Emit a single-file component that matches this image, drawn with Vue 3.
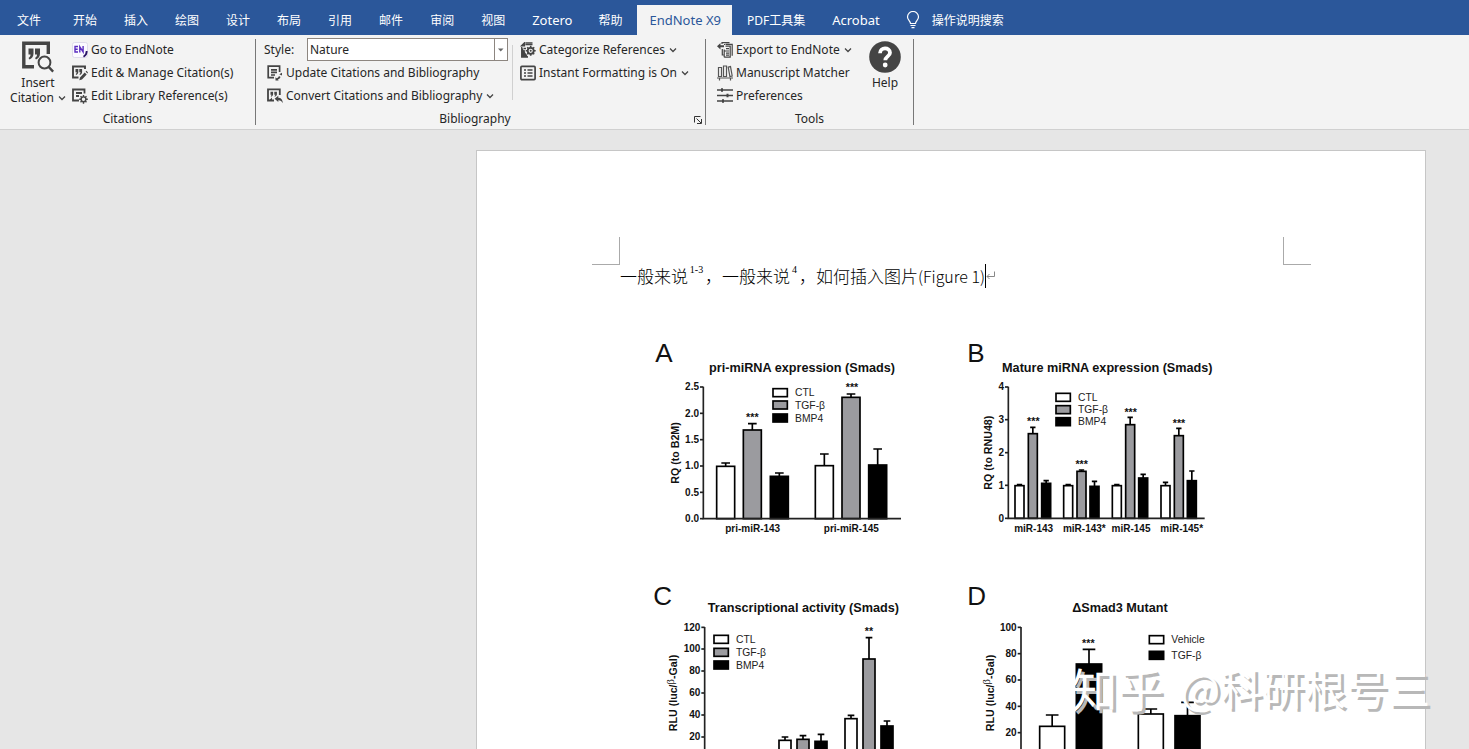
<script setup>
import { ref } from 'vue'

const tabs = ['文件', '开始', '插入', '绘图', '设计', '布局', '引用', '邮件', '审阅', '视图', 'Zotero', '帮助', 'EndNote X9', 'PDF工具集', 'Acrobat']
const isLatin = (t) => /^[\w ]+$/.test(t)
const active = ref('EndNote X9')
const style = ref('Nature')

const WHITE = '#fff'
const GREY = '#9b9b9f'
const BLACK = '#000'

// Chart geometry is in thirds of a pixel (viewBox is three times the drawn size).
const bar = (x, w, top, err, fill) => ({ x, w, top, err, fill })
const trio = (xs, w, tops, errs) => xs.map((x, i) => bar(x, w, tops[i], errs[i], [WHITE, GREY, BLACK][i]))
const threeKeys = (ys) => ['CTL', 'TGF-β', 'BMP4'].map((name, i) => ({ name, y: ys[i], fill: [WHITE, GREY, BLACK][i] }))

const charts = [
  {
    id: 'A', letterX: 46, letterY: 81, title: 'pri-miRNA expression (Smads)', titleX: 486, titleY: 110,
    axisX: 190, axisEnd: 783, top: 155, base: 551,
    ticks: [['2.5', 156], ['2.0', 235], ['1.5', 314], ['1.0', 393], ['0.5', 472], ['0.0', 551]],
    unit: 'RQ (to B2M)', unitX: 117, unitY: 354,
    bars: [
      ...trio([230, 310, 391], 54, [394, 285, 424], [384, 266, 414]),
      ...trio([526, 606, 686], 54, [392, 187, 390], [357, 177, 342]),
    ],
    cap: 13,
    stars: [['***', 337, 258], ['***', 636, 168]],
    labels: [['pri-miR-143', 338], ['pri-miR-145', 634]],
    keyX: 399, keys: threeKeys([161, 198, 237]),
  },
  {
    id: 'B', letterX: 52, letterY: 81, title: 'Mature miRNA expression (Smads)', titleX: 472, titleY: 110,
    axisX: 175, axisEnd: 764, top: 155, base: 550,
    ticks: [['4', 156], ['3', 254], ['2', 353], ['1', 451], ['0', 550]],
    unit: 'RQ (to RNU48)', unitX: 127, unitY: 353,
    bars: [
      ...trio([195, 235, 275], 27, [452, 296, 445], [449, 277, 437]),
      ...trio([341, 381, 420], 27, [452, 409, 454], [449, 405, 439]),
      ...trio([487, 527, 566], 27, [452, 269, 429], [449, 247, 418]),
      ...trio([633, 673, 712], 27, [452, 302, 437], [442, 280, 408]),
    ],
    cap: 8,
    stars: [['***', 250, 270], ['***', 395, 400], ['***', 542, 242], ['***', 687, 276]],
    labels: [['miR-143', 251], ['miR-143*', 403], ['miR-145', 543], ['miR-145*', 695]],
    keyX: 318, keys: threeKeys([175, 212, 248]),
  },
  {
    id: 'C', letterX: 40, letterY: 75, title: 'Transcriptional activity (Smads)', titleX: 490, titleY: 95,
    axisX: 194, axisEnd: 790, top: 141, base: 537,
    ticks: [['120', 142], ['100', 207], ['80', 273], ['60', 339], ['40', 405], ['20', 471]],
    unit: 'beta', unitX: 111, unitY: 339,
    bars: [
      ...trio([417, 471, 525], 36, [481, 478, 484], [471, 467, 463]),
      ...trio([615, 669, 723], 36, [416, 237, 438], [406, 173, 423]),
    ],
    cap: 10,
    stars: [['**', 687, 166]],
    labels: [],
    keyX: 222, keys: threeKeys([166, 205, 243]),
  },
  {
    id: 'D', letterX: 52, letterY: 75, title: 'ΔSmad3 Mutant', titleX: 510, titleY: 95,
    axisX: 213, axisEnd: 800, top: 141, base: 537,
    ticks: [['100', 142], ['80', 221], ['60', 300], ['40', 379], ['20', 458]],
    unit: 'beta', unitX: 131, unitY: 339,
    bars: [
      bar(269, 75, 439, 405, WHITE), bar(379, 76, 252, 208, BLACK),
      bar(565, 75, 402, 387, WHITE), bar(675, 75, 407, 367, BLACK),
    ],
    cap: 19,
    stars: [['***', 415, 201]],
    labels: [],
    keyX: 598, keys: [{ name: 'Vehicle', y: 167, fill: WHITE }, { name: 'TGF-β', y: 214, fill: BLACK }],
  },
]
</script>

<template>
  <div class="app">
    <nav class="tabs">
      <button
        v-for="t in tabs" :key="t" type="button" class="tab"
        :class="{ active: t === active, file: t === '文件', latin: isLatin(t) }" @click="active = t"
      >{{ t }}</button>
      <button type="button" class="tell">
        <svg width="14" height="18" viewBox="0 0 14 18" fill="none" stroke="#fff" stroke-width="1.2">
          <path d="M4.500 12.500C4.500 10 1.500 9 1.500 6a5.300 5.300 0 0 1 11 0c0 3-3 4-3 6.500zM4.500 14.500h5M5.500 16.600h3" />
        </svg>
        <span>操作说明搜索</span>
      </button>
    </nav>

    <div class="ribbon">
      <section class="group citations">
        <div class="tools">
          <button type="button" class="big">
            <svg width="32" height="32" viewBox="0 0 32 32">
              <path d="M26.300 13V2.300H1.800v23.500H12" fill="none" stroke="#444" stroke-width="3.400" />
              <path d="M6.500 7.500h5v5c0 3-1.500 5-4 6l-1-1.500c1.400-.8 2-1.800 2-3.500h-2zM13 7.500h5v5c0 3-1.500 5-4 6l-1-1.500c1.400-.8 2-1.800 2-3.500h-2z" fill="#444" />
              <circle cx="22.500" cy="21.500" r="5.900" fill="#f3f3f3" stroke="#444" stroke-width="2" />
              <path d="M26.600 25.800l4.600 4.800" stroke="#444" stroke-width="2.400" />
            </svg>
            <span>Insert</span>
            <span class="line">Citation
              <svg class="chev" width="8" height="6" viewBox="0 0 8 6"><path d="M1 1.500l3 3 3-3" /></svg>
            </span>
          </button>
          <div class="stack">
            <button type="button" class="cmd">
              <svg width="16" height="16" viewBox="0 0 16 16">
                <rect x="0.500" y="0.500" width="15" height="15" rx="2" fill="#fbfaff" stroke="#dedaea" />
                <path d="M6 4.500H3v5.500H6M3 7.200h2.700M7.800 10.500V4.800l3.300 5V4" fill="none" stroke="#5b2cc0" stroke-width="1.400" />
                <path d="M14.700 9c0 3-.7 4.400-3.200 5.700" fill="none" stroke="#2a1464" stroke-width="1.800" />
              </svg>
              Go to EndNote
            </button>
            <button type="button" class="cmd">
              <svg width="16" height="16" viewBox="0 0 16 16">
                <path d="M13 4V1.500H1v11h5.500" fill="none" stroke="#444" stroke-width="1.900" />
                <path d="M3.500 4h2.800v3c0 1.500-.8 2.400-2.200 2.900l-.4-.9c.6-.4 1-.8 1-1.700H3.500zM7.300 4h2.800v3c0 1.500-.8 2.400-2.200 2.900l-.4-.9c.6-.4 1-.8 1-1.700H7.300z" fill="#444" />
                <path d="M7.300 15.300l.7-2.700 4.700-5 2 2-4.700 5zM13.600 6.600l.8-.8 1.600 1.700-.7.900z" fill="#444" />
              </svg>
              Edit &amp; Manage Citation(s)
            </button>
            <button type="button" class="cmd">
              <svg width="16" height="16" viewBox="0 0 16 16" fill="none" stroke="#444">
                <path d="M12.500 5.500v-4H1v11h6M4 5h6M4 8h3" stroke-width="1.800" />
                <circle cx="11.500" cy="11.300" r="2.400" stroke-width="1.400" />
                <path d="M11.500 7v2M11.500 13.700v2M7.200 11.300h2M13.800 11.300h2M8.500 8.300l1.300 1.300M13.200 13l1.300 1.300M14.500 8.300l-1.300 1.300M9.800 13l-1.300 1.300" stroke-width="1.400" />
              </svg>
              Edit Library Reference(s)
            </button>
          </div>
        </div>
        <div class="caption"><span>Citations</span></div>
      </section>

      <section class="group biblio">
        <div class="tools">
          <div class="stack left">
            <div class="style-row">
              <label for="style">Style:</label>
              <div class="picker">
                <select id="style" v-model="style">
                  <option>Nature</option>
                  <option>Science</option>
                  <option>Vancouver</option>
                </select>
                <svg class="drop" width="13" height="21" viewBox="0 0 13 21"><path d="M0.500 0v21" stroke="#8d8680" /><path d="M4 9.500h5.500l-2.750 3z" fill="#666" /></svg>
              </div>
            </div>
            <button type="button" class="cmd">
              <svg width="16" height="16" viewBox="0 0 16 16">
                <path d="M12.600 7V1.200H1.200v11.500H7M4 4.800h6M4 7.400h6M4 10h4" fill="none" stroke="#444" stroke-width="1.700" />
                <path d="M8.500 15.500v-3.300l1 1c1.300-.3 2-1 2.500-2.200l1.500.9c-.6 1.500-1.500 2.300-2.800 2.600l1 1zM12.300 9.200l2.700-1.500v2.800z" fill="#444" />
              </svg>
              Update Citations and Bibliography
            </button>
            <button type="button" class="cmd">
              <svg width="16" height="16" viewBox="0 0 16 16">
                <path d="M12.800 7V1.300H1v11.200h6" fill="none" stroke="#444" stroke-width="1.800" />
                <path d="M3.500 3.800h2.600v2.500c0 1.300-.8 2-2 2.500l-.4-.8c.5-.3.900-.6.900-1.300H3.500zM7.300 3.800h2.600v2.500c0 1.300-.8 2-2 2.500l-.4-.8c.5-.3.900-.6.900-1.300H7.300zM2 12.500l3-3v3z" fill="#444" />
                <path d="M7.600 10.700l3.700-3v2c2.800 0 4.500 2 4.500 5.600-1-2.100-2.200-3-4.500-3v1.800z" fill="#444" />
              </svg>
              Convert Citations and Bibliography
              <svg class="chev" width="8" height="6" viewBox="0 0 8 6"><path d="M1 1.500l3 3 3-3" /></svg>
            </button>
          </div>
          <div class="stack right">
            <button type="button" class="cmd">
              <svg width="16" height="16" viewBox="0 0 16 16">
                <path d="M1.500 3.800l3-3v3zM5.500.8h7M5.500 2.500h7M1.700 5v10H8M3.500 6.500h2.500M3.500 9h1.500M3.500 11h1.500M3.500 13h3" stroke="#444" stroke-width="1.300" fill="#444" />
                <circle cx="10.700" cy="8.800" r="3" fill="#f3f3f3" stroke="#444" stroke-width="1.800" />
                <circle cx="10.700" cy="8.800" r="1" fill="#444" />
                <path d="M10.700 3.800v2M10.700 11.800v2M5.700 8.800h2M13.700 8.800h2M7.200 5.300l1.400 1.400M12.800 10.900l1.400 1.400M14.200 5.300l-1.400 1.400M8.600 10.900l-1.400 1.400" stroke="#444" stroke-width="1.600" />
              </svg>
              Categorize References
              <svg class="chev" width="8" height="6" viewBox="0 0 8 6"><path d="M1 1.500l3 3 3-3" /></svg>
            </button>
            <button type="button" class="cmd">
              <svg width="16" height="16" viewBox="0 0 16 16" fill="none" stroke="#444">
                <rect x="0.900" y="1.400" width="14.200" height="13.200" rx="1" stroke-width="1.700" />
                <path d="M4 5h2M7.500 5h5M4 8h2M7.500 8h5M4 11h2M7.500 11h5" stroke-width="1.500" />
              </svg>
              Instant Formatting is On
              <svg class="chev" width="8" height="6" viewBox="0 0 8 6"><path d="M1 1.500l3 3 3-3" /></svg>
            </button>
          </div>
        </div>
        <div class="caption">
          <span>Bibliography</span>
          <button type="button" class="launcher" aria-label="Bibliography options">
            <svg width="8" height="8" viewBox="0 0 8 8" fill="none" stroke="#333"><path d="M0.500 6.500v-6h6M2.500 2.500l4.500 4.500M7.500 3v4.500H3" /></svg>
          </button>
        </div>
      </section>

      <section class="group extras">
        <div class="tools">
          <div class="stack">
            <button type="button" class="cmd">
              <svg width="16" height="16" viewBox="0 0 16 16">
                <path d="M0 4.300L3.500 1v2.300H7v2H3.500v2.300z" fill="#444" />
                <path d="M5 2V.7h7.500M8 2.500h-1M8.500 2.300h6.700v11.500M5.300 7v6h1.200M7.200 15.200h6V4.200H8.500M7.200 7.500v7.700M9 6.700h3M7.500 9h4.500M9 11.200h3M9 13.200h3" fill="none" stroke="#444" stroke-width="1.200" />
              </svg>
              Export to EndNote
              <svg class="chev" width="8" height="6" viewBox="0 0 8 6"><path d="M1 1.500l3 3 3-3" /></svg>
            </button>
            <button type="button" class="cmd">
              <svg width="16" height="16" viewBox="0 0 16 16" fill="none" stroke="#555" stroke-width="1.200">
                <path d="M1.500 2.500h3v9h-3zM6.500 1h3v10.500h-3zM11.200 2.200l2.300-.6 1.700 9.400-2.300.5zM0 13h16M2.500 13v2.500M13.500 13v2.500" />
              </svg>
              Manuscript Matcher
            </button>
            <button type="button" class="cmd">
              <svg width="16" height="16" viewBox="0 0 16 16" fill="none" stroke="#444">
                <path d="M0 2h16M0 7.500h16M0 13h16" stroke-width="1.600" />
                <path d="M5 .2v3.600M10.500 5.700v3.600M6 11.200v3.600" stroke-width="2" />
              </svg>
              Preferences
            </button>
          </div>
          <button type="button" class="big help">
            <svg width="32" height="32" viewBox="0 0 32 32">
              <circle cx="16" cy="16" r="15.800" fill="#444" />
              <path d="M11 12.300c0-6.500 10-6.300 10-.6 0 3.600-4.700 3.800-4.700 7.600" fill="none" stroke="#fff" stroke-width="3.800" />
              <circle cx="16.200" cy="24" r="2.400" fill="#fff" />
            </svg>
            <span>Help</span>
          </button>
        </div>
        <div class="caption"><span>Tools</span></div>
      </section>
    </div>

    <main class="desk">
      <article class="page">
        <div class="corners"><i class="corner tl"></i><i class="corner tr"></i></div>
        <p class="text" lang="zh-CN">一般来说<sup>1-3</sup>，一般来说<sup class="one">4</sup>，如何插入图片<span class="latin">(Figure 1)</span><i class="caret"></i><svg width="10" height="10" viewBox="0 0 10 10" fill="none" stroke="#888"><path d="M8.500 0.500v5H1M3.500 3L1 5.500 3.500 8" /></svg></p>

        <div class="figure">
          <svg v-for="c in charts" :key="c.id" class="chart" viewBox="0 0 930 735" role="img" :aria-label="c.title">
            <text :x="c.letterX" :y="c.letterY" class="letter">{{ c.id }}</text>
            <text :x="c.titleX" :y="c.titleY" class="title">{{ c.title }}</text>
            <text class="unit" :transform="`translate(${c.unitX} ${c.unitY}) rotate(-90)`">
              <template v-if="c.unit === 'beta'">RLU (luc/<tspan class="beta" dy="-10">β</tspan><tspan dy="10">-Gal)</tspan></template>
              <template v-else>{{ c.unit }}</template>
            </text>
            <g v-for="[name, y] in c.ticks" :key="name">
              <path :d="`M${c.axisX - 10} ${y}H${c.axisX}`" class="axis" />
              <text :x="c.axisX - 13" :y="y + 10" class="tick">{{ name }}</text>
            </g>
            <g v-for="(b, i) in c.bars" :key="i">
              <path :d="`M${b.x + b.w / 2} ${b.top}V${b.err}M${b.x + b.w / 2 - c.cap} ${b.err}h${c.cap * 2}`" class="err" />
              <rect :x="b.x" :y="b.top" :width="b.w" :height="c.base - b.top" :fill="b.fill" class="bar" />
            </g>
            <path :d="`M${c.axisX} ${c.top}V${c.base}H${c.axisEnd}`" class="axis" />
            <text v-for="([s, x, y], i) in c.stars" :key="'s' + i" :x="x" :y="y" class="stars">{{ s }}</text>
            <text v-for="[l, x] in c.labels" :key="l" :x="x" y="590" class="label">{{ l }}</text>
            <g v-for="k in c.keys" :key="k.name">
              <rect :x="c.keyX" :y="k.y" width="43" height="24" :fill="k.fill" class="bar" />
              <text :x="c.keyX + 66" :y="k.y + 23" class="key">{{ k.name }}</text>
            </g>
          </svg>
        </div>
      </article>
      <div class="watermark"><span class="brand">知乎</span><span>@科研根号三</span></div>
    </main>
  </div>
</template>

<style>
body { margin: 0; }
</style>

<style scoped>
.app {
  height: 100vh;
  display: flex;
  flex-direction: column;
  overflow: hidden;
  background: #e6e6e6;
  color: #262626;
  font: 12px/15px "Noto Sans", "Noto Sans CJK SC", sans-serif;
}
button {
  font: inherit;
  color: inherit;
  background: none;
  border: 0;
  padding: 0;
  margin: 0;
  white-space: nowrap;
}
svg { flex: none; }

.tabs {
  flex: none;
  display: flex;
  align-items: flex-end;
  gap: 3px;
  height: 35px;
  padding-left: 5px;
  background: #2b579a;
  color: #fff;
}
.tab { height: 30px; padding: 0 12px; }
.tab.file { margin-right: 5px; }
.tab.latin { padding-right: 11px; font-size: 13px; }
.tab.active { background: #f3f3f3; color: #2b579a; }
.tell {
  display: flex;
  align-items: center;
  gap: 12px;
  height: 30px;
  margin-left: 12px;
}

.ribbon {
  flex: none;
  display: flex;
  height: 94px;
  background: #f3f3f3;
  border-bottom: 1px solid #d0d0d0;
}
.group {
  position: relative;
  flex: none;
  box-sizing: border-box;
  padding-top: 3px;
}
.group::after {
  content: "";
  position: absolute;
  top: 4px;
  right: 0;
  bottom: 4px;
  width: 1px;
  background: #777;
}
.citations { width: 256px; }
.biblio { width: 450px; }
.extras { width: 208px; }
.tools { display: flex; height: 69px; }
.caption { display: flex; align-items: center; height: 22px; padding-right: 1px; }
.caption span { flex: 1; text-align: center; }
.launcher { display: flex; width: 11px; padding-top: 4px; }

.stack { display: flex; flex-direction: column; }
.cmd { display: flex; align-items: center; gap: 3px; height: 23px; }
.chev { fill: none; stroke: #444; stroke-width: 1.300; }
.cmd .chev { margin-left: 1px; }
.big {
  display: flex;
  flex-direction: column;
  align-items: center;
  width: 66px;
  padding-top: 3px;
  margin: 0 1px 0 5px;
}
.big > svg { margin-bottom: 2px; }
.line { display: flex; align-items: center; gap: 4px; }
.help { width: 40px; margin: 0 0 0 8px; }

.left { box-sizing: border-box; width: 257px; padding-left: 11px; position: relative; }
.left::after {
  content: "";
  position: absolute;
  top: 7px;
  right: 0;
  bottom: 7px;
  width: 1px;
  background: #d0d0d0;
}
.right { padding-left: 7px; }
.style-row { display: flex; align-items: center; height: 23px; margin-left: -3px; }
.style-row label { width: 43px; }
.picker {
  position: relative;
  box-sizing: border-box;
  width: 201px;
  height: 23px;
  border: 1px solid #8d8680;
  background: #fff;
}
.picker select {
  appearance: none;
  display: block;
  width: 100%;
  height: 20px;
  padding: 0 16px 0 2px;
  border: 0;
  background: none;
  font: inherit;
  color: inherit;
}
.drop { position: absolute; top: 0; right: 0; pointer-events: none; }
.extras .stack { box-sizing: border-box; width: 151px; padding-left: 11px; }

.desk {
  position: relative;
  flex: 1;
  min-height: 0;
  padding: 20px 43px 0 476px;
  overflow: hidden;
}
.page {
  border: 1px solid #c6c6c6;
  background: #fff;
  padding: 86px 114px 0 115px;
}
.corners { display: flex; justify-content: space-between; }
.corner { box-sizing: border-box; width: 28px; height: 28px; border: 0 solid #aaa; border-bottom-width: 1px; }
.tl { border-right-width: 1px; }
.tr { border-left-width: 1px; }
.text {
  display: flex;
  align-items: center;
  height: 22px;
  margin: 0 0 48px 28px;
  color: #000;
  font: 300 17px/24px "Noto Sans CJK SC", sans-serif;
  white-space: pre;
}
.text .latin { font-size: 16px; }
.text sup {
  width: 17px;
  padding-bottom: 12px;
  font: 10px/12px "Liberation Serif", serif;
  text-align: center;
}
.text sup.one { width: 9px; }
.caret { width: 1px; height: 24px; background: #000; }

.figure {
  display: grid;
  grid-template-columns: 310px 310px;
  margin-left: 48px;
}
.chart { display: block; width: 100%; font-family: "Liberation Sans", Arial, sans-serif; fill: #111; }
.letter { font-size: 78px; }
.title { font-size: 38px; font-weight: 700; text-anchor: middle; }
.unit { font-size: 32px; font-weight: 700; text-anchor: middle; }
.beta { font-family: "Liberation Serif", serif; font-weight: 400; }
.tick { font-size: 30px; font-weight: 700; text-anchor: end; }
.label { font-size: 30px; font-weight: 700; text-anchor: middle; }
.stars { font-size: 32px; font-weight: 700; text-anchor: middle; }
.key { font-size: 31px; fill: #222; }
.axis { fill: none; stroke: #222; stroke-width: 5px; }
.bar { stroke: #000; stroke-width: 5px; }
.err { fill: none; stroke: #000; stroke-width: 5px; }

.watermark {
  position: absolute;
  right: 39px;
  bottom: 41px;
  display: flex;
  align-items: center;
  gap: 17px;
  color: #fff;
  font: 42px/42px "Noto Sans CJK SC", sans-serif;
  text-shadow: 3px 3px 0 #b8b8b8;
  white-space: nowrap;
}
.brand { font-size: 46px; }
</style>
